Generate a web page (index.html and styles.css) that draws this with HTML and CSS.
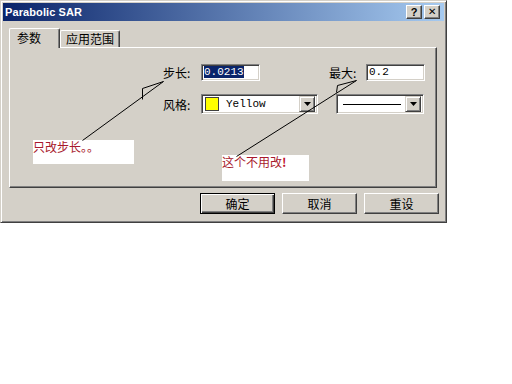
FILE: index.html
```html
<!DOCTYPE html>
<html>
<head>
<meta charset="utf-8">
<link rel="stylesheet" href="styles.css">
</head>
<body>
<div class="dialog">
  <div class="titlebar">
    <span class="title">Parabolic SAR</span>
    <div class="tbtns">
      <span class="tbtn">?</span>
      <span class="tbtn x">✕</span>
    </div>
  </div>
  <div class="tabs">
    <div class="tab active">参数</div>
    <div class="tab">应用范围</div>
  </div>
  <div class="panel">
    <div class="row r1">
      <span class="lbl">步长:</span>
      <div class="field w59"><span class="sel">0.0213</span></div>
      <span class="lbl l2">最大:</span>
      <div class="field w59">0.2</div>
    </div>
    <div class="row r2">
      <span class="lbl">风格:</span>
      <div class="combo w117">
        <span class="swatch"></span><span class="ctext">Yellow</span>
        <span class="drop"><svg width="7" height="4" viewBox="0 0 7 4"><path d="M0 0h7L3.5 4z" fill="#000"/></svg></span>
      </div>
      <div class="combo w88 c2">
        <span class="line"></span>
        <span class="drop"><svg width="7" height="4" viewBox="0 0 7 4"><path d="M0 0h7L3.5 4z" fill="#000"/></svg></span>
      </div>
    </div>
  </div>
  <div class="buttons">
    <div class="btn def"><span>确定</span></div>
    <div class="btn"><span>取消</span></div>
    <div class="btn"><span>重设</span></div>
  </div>
  <div class="note n1">只改步长。。</div>
  <div class="note n2">这个不用改<b>!</b></div>
  <svg class="arrows" width="446" height="222" viewBox="0 0 446 222">
    <g stroke="#000" stroke-width="1" fill="none">
      <path d="M82.5 140.5 L163.5 81.5 L142.5 88.5 L142.5 99.5"/>
      <path d="M236.5 156.5 L356.5 80.5 L337.5 85.5 L336.5 92.5"/>
    </g>
  </svg>
</div>
</body>
</html>
```
FILE: styles.css
```css
html, body { margin: 0; padding: 0; background: #fff; }
body { width: 512px; height: 384px; overflow: hidden; font-family: "Noto Sans CJK SC", "Liberation Sans", sans-serif; font-size: 12px; }

.dialog {
  position: relative;
  width: 447px;
  height: 223px;
  box-sizing: border-box;
  background: #d4d0c8;
  border-top: 1px solid #d4d0c8;
  border-left: 1px solid #d4d0c8;
  border-right: 1px solid #404040;
  border-bottom: 1px solid #404040;
  box-shadow: inset 1px 1px 0 #fff, inset -1px -1px 0 #808080;
  padding: 2px 2px 0 2px;
  display: flex;
  flex-direction: column;
}

.titlebar {
  height: 18px;
  background: linear-gradient(to right, #0a246a, #a6caf0);
  display: flex;
  align-items: center;
  justify-content: space-between;
  padding: 0 4px 0 2px;
}
.title {
  color: #fff;
  font-family: "Liberation Sans", sans-serif;
  font-weight: bold;
  font-size: 11px;
  letter-spacing: 0.1px;
}
.tbtns { display: flex; gap: 2px; }
.tbtn {
  width: 16px; height: 14px;
  box-sizing: border-box;
  background: #d4d0c8;
  border-top: 1px solid #fff; border-left: 1px solid #fff;
  border-right: 1px solid #404040; border-bottom: 1px solid #404040;
  box-shadow: inset -1px -1px 0 #808080;
  font-family: "Liberation Sans", sans-serif;
  font-weight: bold; font-size: 11px; line-height: 12px;
  text-align: center; color: #000;
}
.tbtn.x { font-size: 10px; font-weight: normal; }

.tabs {
  display: flex;
  align-items: flex-end;
  height: 26px;
  padding-left: 6px;
}
.tab {
  height: 17px;
  padding: 0 5px;
  box-sizing: border-box;
  border-top: 1px solid #fff;
  border-left: 1px solid #fff;
  border-right: 1px solid #404040;
  box-shadow: inset -1px 0 0 #808080;
  line-height: 15px;
  border-radius: 2px 2px 0 0;
  color: #000;
}
.tab.active {
  width: 51px;
  height: 20px;
  padding-left: 7px;
  line-height: 17px;
  margin-bottom: -1px;
  background: #d4d0c8;
  position: relative;
  z-index: 1;
}

.panel {
  margin-left: 6px;
  width: 428px;
  height: 141px;
  box-sizing: border-box;
  border-top: 1px solid #fff;
  border-left: 1px solid #fff;
  border-right: 1px solid #404040;
  border-bottom: 1px solid #404040;
  box-shadow: inset -1px -1px 0 #808080;
  padding: 16px 0 0 153px;
}
.row { display: flex; align-items: center; }
.r1 { height: 17px; }
.r2 { height: 20px; margin-top: 13px; }
.lbl { width: 38px; color: #000; }
.lbl.l2 { margin-left: 69px; width: 37px; }

.field, .combo {
  box-sizing: border-box;
  background: #fff;
  border-top: 1px solid #808080; border-left: 1px solid #808080;
  border-right: 1px solid #fff; border-bottom: 1px solid #fff;
  box-shadow: inset 1px 1px 0 #404040, inset -1px -1px 0 #d4d0c8;
  font-family: "Liberation Mono", monospace;
  font-size: 11px;
  color: #000;
}
.field { height: 17px; padding: 0 2px; line-height: 15px; }
.w59 { width: 59px; }
.sel { background: #0a246a; color: #fff; }

.combo { height: 20px; display: flex; align-items: center; padding: 2px; }
.w117 { width: 117px; }
.w88 { width: 88px; margin-left: 18px; }
.swatch { width: 12px; height: 12px; background: #ffff00; border: 1px solid #404040; margin-left: 1px; }
.ctext { margin-left: 7px; flex: 1; font-family: "Liberation Mono", monospace; font-size: 11px; }
.line { flex: 1; height: 1px; background: #000; margin: 0 4px 0 4px; }
.drop {
  width: 16px; height: 16px;
  box-sizing: border-box;
  background: #d4d0c8;
  border-top: 1px solid #d4d0c8; border-left: 1px solid #d4d0c8;
  border-right: 1px solid #404040; border-bottom: 1px solid #404040;
  box-shadow: inset 1px 1px 0 #fff, inset -1px -1px 0 #808080;
  display: flex; align-items: center; justify-content: center;
}

.buttons {
  display: flex;
  gap: 7px;
  margin-top: 5px;
  padding-left: 197px;
}
.btn {
  width: 75px; height: 21px;
  box-sizing: border-box;
  border-top: 1px solid #fff; border-left: 1px solid #fff;
  border-right: 1px solid #404040; border-bottom: 1px solid #404040;
  box-shadow: inset -1px -1px 0 #808080;
  display: flex; align-items: center; justify-content: center;
  color: #000;
}
.btn.def { border: 1px solid #000; box-shadow: inset 1px 1px 0 #fff, inset -1px -1px 0 #404040, inset -2px -2px 0 #808080; }

.note {
  position: absolute;
  background: #fff;
  color: #a8182c;
  font-size: 12px;
  line-height: 14px;
  box-sizing: border-box;
}
.note b { color: #c0102a; }
.n1 { left: 32px; top: 139px; width: 101px; height: 24px; }
.n2 { left: 221px; top: 154px; width: 87px; height: 26px; }
.arrows { position: absolute; left: -1px; top: -1px; pointer-events: none; }
```
